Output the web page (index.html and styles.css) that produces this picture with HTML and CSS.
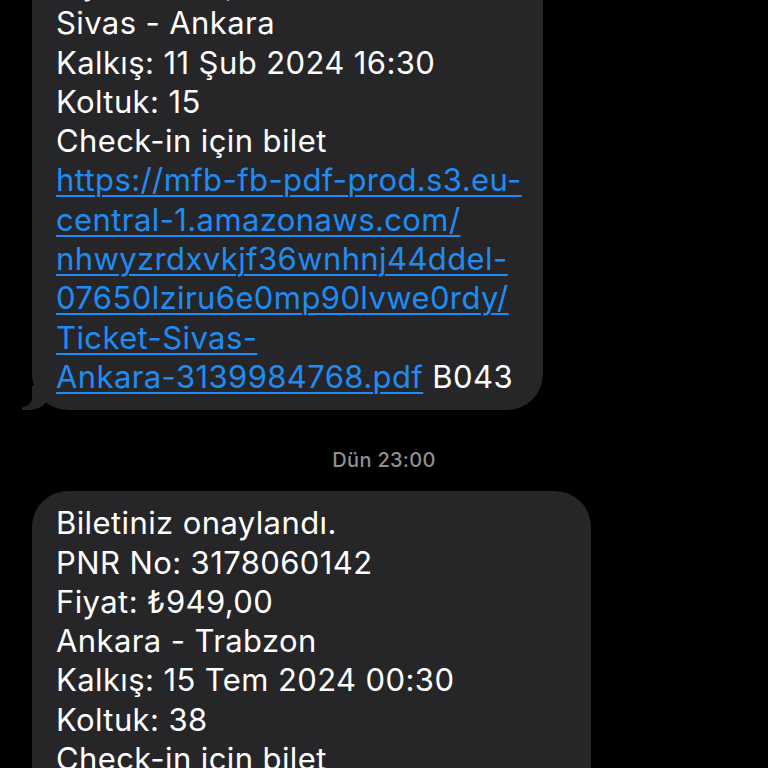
FILE: index.html
```html
<!DOCTYPE html>
<html lang="tr">
<head>
<meta charset="utf-8">
<title>Mesajlar</title>
<link rel="stylesheet" href="styles.css">
</head>
<body>
<main class="thread">
  <div class="bubble bubble-first tail">
    <p class="msg">Fiyat: ₺949,00<br>Sivas - Ankara<br>Kalkış: 11 Şub 2024 16:30<br>Koltuk: 15<br>Check-in için bilet<br><a class="link" href="#">https://mfb-fb-pdf-prod.s3.eu-<br>central-1.amazonaws.com/<br>nhwyzrdxvkjf36wnhnj44ddel-<br>07650lziru6e0mp90lvwe0rdy/<br>Ticket-Sivas-<br>Ankara-3139984768.pdf</a> B043</p>
  </div>
  <div class="stamp">Dün 23:00</div>
  <div class="bubble bubble-second">
    <p class="msg">Biletiniz onaylandı.<br>PNR No: 3178060142<br>Fiyat: ₺949,00<br>Ankara - Trabzon<br>Kalkış: 15 Tem 2024 00:30<br>Koltuk: 38<br>Check-in için bilet<br><a class="link" href="#">https://mfb-fb-pdf-prod.s3.eu-</a></p>
  </div>
</main>
</body>
</html>
```

FILE: styles.css
```css
html, body {
  margin: 0;
  padding: 0;
  background: #000;
  height: 100%;
  overflow: hidden;
}

.thread {
  display: flex;
  flex-direction: column;
  align-items: flex-start;
  margin-top: -48px;
  padding-left: 32px;
  font-family: Inter, "Noto Sans", sans-serif;
}

.bubble {
  position: relative;
  background: #262628;
  border-radius: 36px;
  padding: 12px 20px 14px 24px;
  box-sizing: border-box;
}

.bubble-first {
  width: 511px;
}

.bubble-second {
  width: 559px;
}

.msg {
  margin: 0;
  color: #fff;
  font-size: 31px;
  line-height: 39.3px;
  letter-spacing: 0.4px;
  white-space: nowrap;
}

.link {
  color: #1f8cf5;
  text-decoration: underline;
  text-decoration-thickness: 2px;
  text-underline-offset: 4px;
}

.tail::before {
  content: "";
  position: absolute;
  left: -10px;
  bottom: 0;
  width: 26px;
  height: 24px;
  background: #262628;
  border-bottom-right-radius: 20px 14px;
}

.tail::after {
  content: "";
  position: absolute;
  left: -14px;
  bottom: 2px;
  width: 14px;
  height: 24px;
  background: #000;
  border-bottom-right-radius: 14px 10px;
}

.stamp {
  align-self: stretch;
  margin: 38px 32px 19px 0;
  text-align: center;
  color: #8e8e93;
  font-size: 20px;
  line-height: 24px;
  font-weight: 500;
  letter-spacing: 0.3px;
}
```
